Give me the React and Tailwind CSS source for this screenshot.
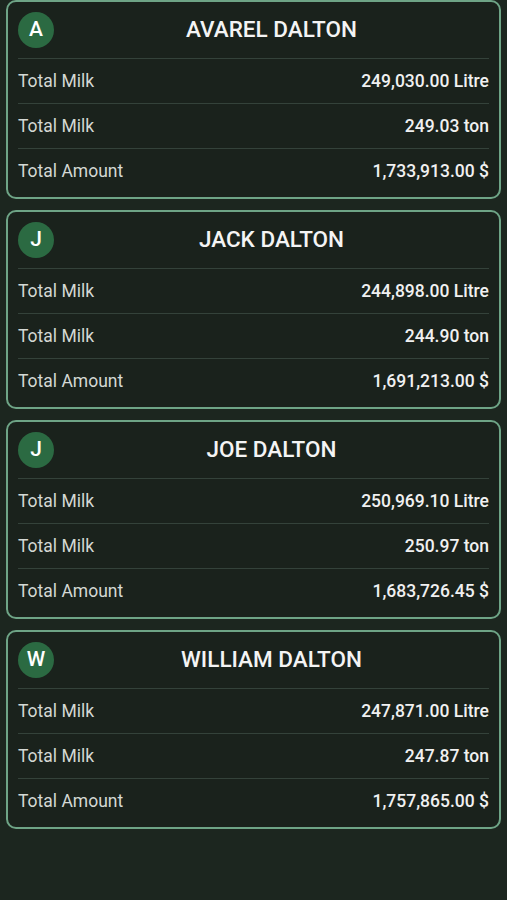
import React from 'react';

const farmers = [
  { name: 'AVAREL DALTON', litre: '249,030.00 Litre', ton: '249.03 ton', amount: '1,733,913.00 $' },
  { name: 'JACK DALTON', litre: '244,898.00 Litre', ton: '244.90 ton', amount: '1,691,213.00 $' },
  { name: 'JOE DALTON', litre: '250,969.10 Litre', ton: '250.97 ton', amount: '1,683,726.45 $' },
  { name: 'WILLIAM DALTON', litre: '247,871.00 Litre', ton: '247.87 ton', amount: '1,757,865.00 $' },
];

const Row = ({ label, value }) => (
  <div className="flex items-center justify-between h-[45px] border-t border-[#34423a]">
    <span className="text-[17.5px] text-[#d4d8d4]">{label}</span>
    <span className="text-[17.5px] font-medium text-[#f0f0f0]">{value}</span>
  </div>
);

const App = () => {
  return (
    <div className="min-h-[900px] bg-[#1c261f] font-['Roboto',sans-serif]">
      <div className="flex flex-col gap-[11px]">
        {farmers.map((f) => (
          <div key={f.name} className="mx-[6px] rounded-[10px] border-2 border-[#6ea486] bg-[#1a221c] px-[10px] pb-[4px]">
            <div className="flex items-center h-[56px]">
              <div className="w-[36px] h-[36px] rounded-full bg-[#2b6a42] flex items-center justify-center text-white text-[21px] font-medium">
                {f.name[0]}
              </div>
              <div className="flex-1 text-center text-[22.5px] font-medium text-[#f4f4f4]">{f.name}</div>
            </div>
            <Row label="Total Milk" value={f.litre} />
            <Row label="Total Milk" value={f.ton} />
            <Row label="Total Amount" value={f.amount} />
          </div>
        ))}
      </div>
    </div>
  );
};

export default App;
